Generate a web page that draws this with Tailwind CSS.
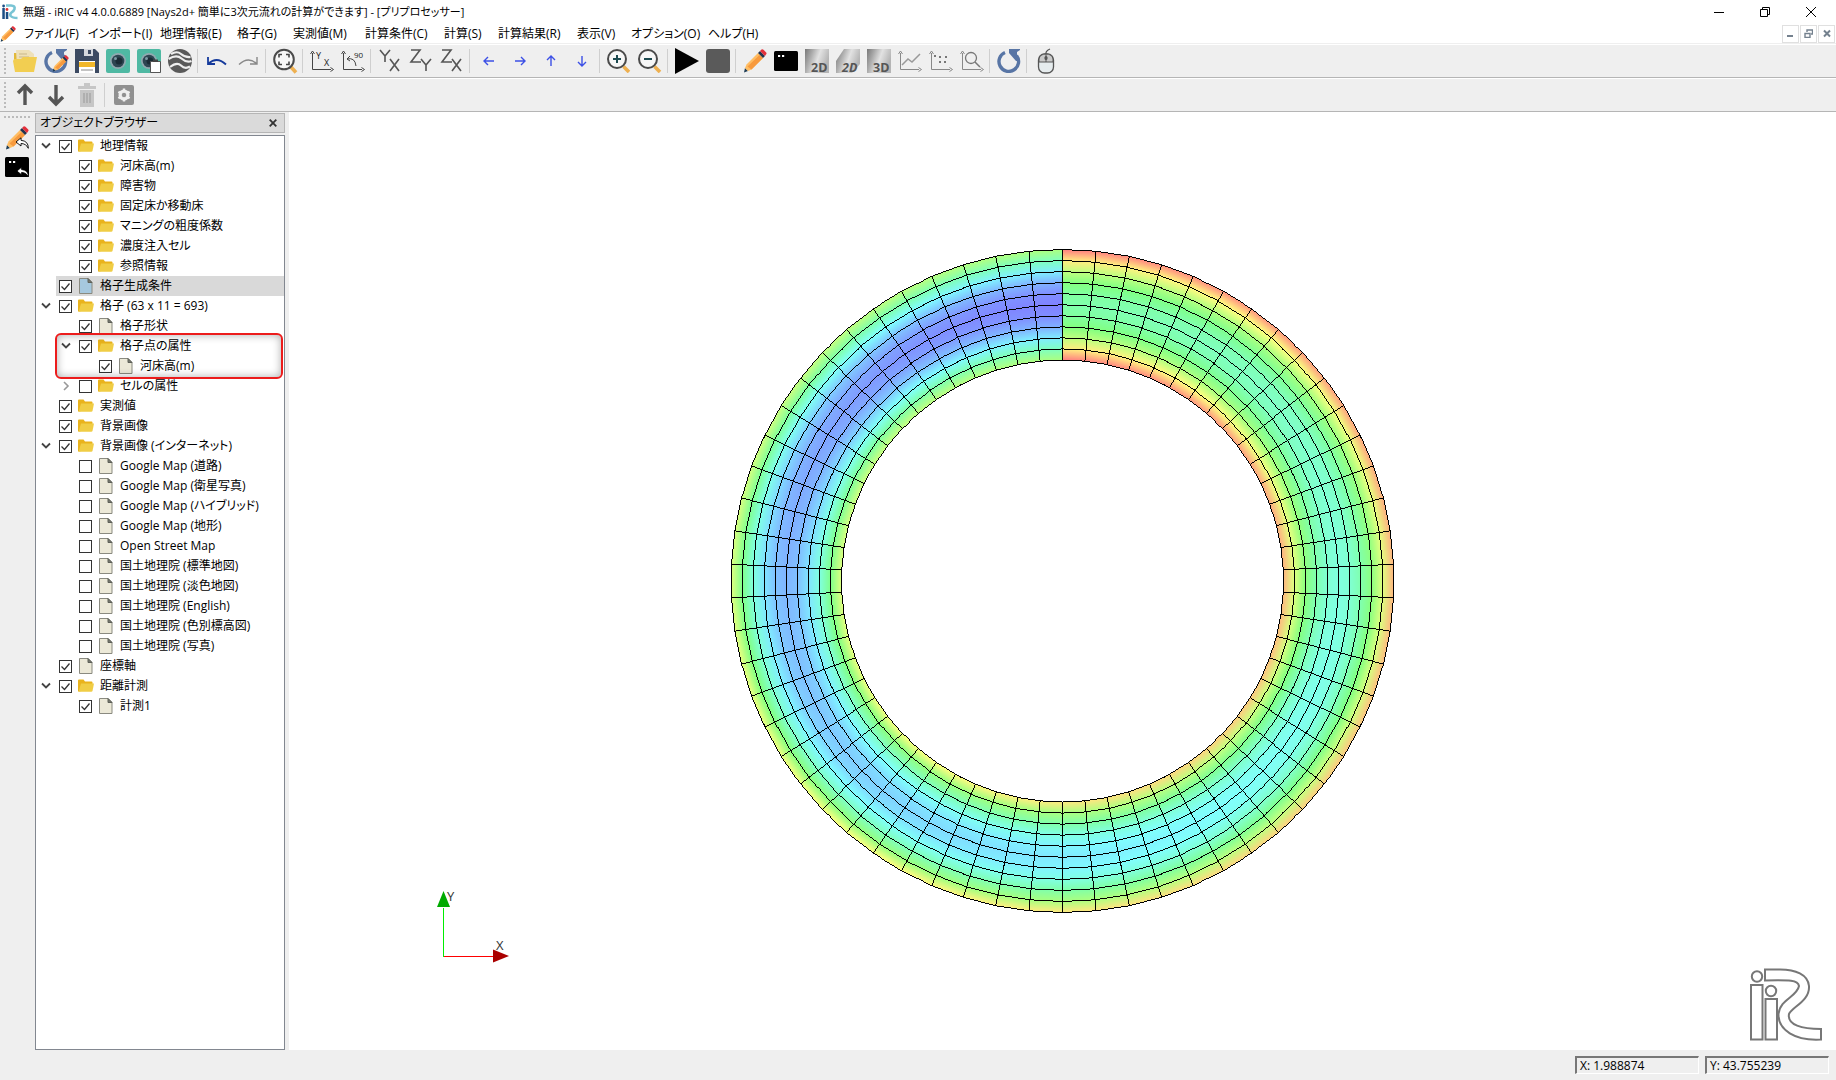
<!DOCTYPE html>
<html lang="ja">
<head>
<meta charset="utf-8">
<title>iRIC - プリプロセッサー</title>
<script src="https://cdn.jsdelivr.net/npm/@tailwindcss/browser@4"></script>
</head>
<body class="flex h-screen flex-col overflow-hidden bg-white text-xs text-black [font-family:'Open_Sans','Noto_Sans_CJK_JP',sans-serif] [font-feature-settings:'palt']">

<svg class="absolute size-0" aria-hidden="true">
  <defs>
    <linearGradient id="metal" x1="0" y1="0" x2="1" y2="0.35">
      <stop offset="0" stop-color="#777"/><stop offset=".3" stop-color="#aaa"/><stop offset=".6" stop-color="#e2e2e2"/><stop offset="1" stop-color="#b5b5b5"/>
    </linearGradient>
    <symbol id="pencil" viewBox="0 0 24 24">
      <path d="M1 23.500l1-4.500 3 3z" fill="#1d3c55"/>
      <path d="M2 19l1.500-3.500L15 4l5 5L8.500 20.500 5 22z" fill="#ffbd63"/>
      <path d="M4.500 17.500L16.500 6l3.500 3L8.500 20.500z" fill="#f79a3e"/>
      <path d="M15 4l2-2 5 5-2 2z" fill="#24344f"/>
      <path d="M17 2l1.500-1.500Q19.500-.2 20.500.8l2.700 2.700Q24 4.500 23 5.500L22 7z" fill="#e3303b"/>
    </symbol>
    <symbol id="folder" viewBox="0 0 16 16">
      <path d="M0 2.500q0-1 1-1h4.500l1.500 2h6.500q1 0 1 1V6L2 13.500H0z" fill="#e9b31c"/>
      <path d="M3 5.500h13L14.500 13q-.3.800-1.200.8H.6z" fill="#f0cd45"/>
    </symbol>
    <symbol id="file" viewBox="0 0 16 16">
      <path d="M1.500.5h8.500l4 4v11H1.500z" fill="currentColor" stroke="#8a8a80"/>
      <path d="M10 .5v4h4z" fill="#777a70" stroke="#5e6058"/>
    </symbol>
    <symbol id="lens" viewBox="0 0 24 24">
      <path d="M16.500 17.500L22 23" stroke="#eeb050" stroke-width="3.600"/>
      <circle cx="10" cy="10" r="9" fill="#f7f7f7" stroke="#4a4a4a" stroke-width="2"/>
    </symbol>
    <symbol id="axes" viewBox="0 0 24 24">
      <path d="M2.500 4v16.500H21M.5 5l2-3 2 3M20.500 18.500l3 2-3 2" fill="none" stroke="currentColor"/>
    </symbol>
    <symbol id="reload" viewBox="0 0 24 24">
      <path d="M8 3.500A9.800 9.800 0 1 0 19.500 6.500" fill="none" stroke="#5875a5" stroke-width="3.400"/>
      <path d="M12 0h11v1l-3 2v9h-1L12 4z" fill="#5875a5"/>
    </symbol>
    <symbol id="camera" viewBox="0 0 24 24">
      <rect width="24" height="24" rx="2" fill="#4fb9a3"/>
      <circle cx="12" cy="12" r="8" fill="#91a9b0"/><circle cx="12" cy="12" r="6.300" fill="#2e4652"/><circle cx="13" cy="12" r="3.500" fill="#1b2c36"/><circle cx="9.500" cy="9.500" r="1.500" fill="#7e99a4"/>
    </symbol>
    <symbol id="console" viewBox="0 0 24 24">
      <rect y="2" width="24" height="20" rx="1.500"/><path d="M4 6h2.200v2H4zM8 6h2.200v2H8z" fill="#fff"/>
    </symbol>
    <symbol id="reply" viewBox="0 0 14 12">
      <path d="M6 .8L1 5l5 4V6.500q5 0 7.300 4.800Q13.500 4 6 3.300z" stroke="#000" stroke-width=".9"/>
    </symbol>
    <symbol id="logo" viewBox="0 0 72 73">
      <g fill="#fff" stroke="#777" stroke-width="2">
        <circle cx="7" cy="8.500" r="5.200"/><rect x="1" y="17" width="11.500" height="54.500"/>
        <circle cx="21" cy="23" r="5.200"/><rect x="15.500" y="31" width="11.500" height="40.500"/>
        <path d="M15 1.500H28C46 1 58 7 59 18 60 33 42 39 39 46 37 57 52 61 71 61V71.500C45 73 28 62 28.500 46 30 31 47 29 49 18 48 12 40 12 15 12.500z"/>
      </g>
    </symbol>
  </defs>
</svg>

<header>
  <div class="flex h-6 items-center">
    <svg class="mr-[5px] ml-0.5 size-4" viewBox="0 0 16 16"><g fill="#44a8c4"><circle cx="1.600" cy="2" r="1.400" fill="#1d4e85"/><path d="M.3 4h2.500v11H.3zM3.800 8h2.500v7H3.800z" fill="#1d4e85"/><circle cx="5" cy="5.500" r="1.400" fill="#d33"/></g><path d="M4 1.500h5q4.500.3 3.500 3.500-.6 2-3 3.500-2 1.500-.8 3.500Q10.500 14 15.500 14" fill="none" stroke="#79c4d4" stroke-width="2.600"/></svg>
    <h1 class="text-[11px]">無題 - iRIC v4 4.0.0.6889 [Nays2d+ 簡単に3次元流れの計算ができます] - [プリプロセッサー]</h1>
    <div class="ml-auto flex h-5 items-center gap-9 pr-5">
      <button aria-label="最小化"><svg class="size-[10px]" viewBox="0 0 10 10"><path d="M0 5.500h10" stroke="#000"/></svg></button>
      <button aria-label="元に戻す"><svg class="size-[10px]" viewBox="0 0 10 10"><path d="M.5 2.500h7v7h-7zM2.500 2.500v-2h7v7h-2" fill="none" stroke="#000"/></svg></button>
      <button aria-label="閉じる"><svg class="size-[10px]" viewBox="0 0 10 10"><path d="M0 0l10 10M10 0L0 10" stroke="#000"/></svg></button>
    </div>
  </div>
  <div class="flex h-[19px] items-center">
    <svg class="mr-2 size-4"><use href="#pencil"/></svg>
    <nav class="flex items-center whitespace-nowrap">
      <button class="w-16 text-left">ファイル(F)</button><button class="w-[72px] text-left">インポート(I)</button><button class="w-[77px] text-left">地理情報(E)</button><button class="w-14 text-left">格子(G)</button><button class="w-[72px] text-left">実測値(M)</button><button class="w-[79px] text-left">計算条件(C)</button><button class="w-[54px] text-left">計算(S)</button><button class="w-[79px] text-left">計算結果(R)</button><button class="w-[54px] text-left">表示(V)</button><button class="w-[77px] text-left">オプション(O)</button><button class="text-left">ヘルプ(H)</button>
    </nav>
    <div class="ml-auto flex gap-px pr-px">
      <button aria-label="ウィンドウを最小化" class="grid h-[18px] w-[17px] place-items-center border border-[#e0e0e0]"><svg class="size-[9px]" viewBox="0 0 9 9"><path d="M1 7h6" stroke="#74818e" stroke-width="2"/></svg></button>
      <button aria-label="ウィンドウを元に戻す" class="grid h-[18px] w-[17px] place-items-center border border-[#e0e0e0]"><svg class="size-[9px]" viewBox="0 0 9 9"><path d="M1 4.500h5v4H1zM3 3V1h5.500v4H7" fill="none" stroke="#74818e" stroke-width="1.400"/></svg></button>
      <button aria-label="ウィンドウを閉じる" class="grid h-[18px] w-[17px] place-items-center border border-[#e0e0e0]"><svg class="size-[9px]" viewBox="0 0 9 9"><path d="M2 1.500l6 6M8 1.500l-6 6" stroke="#74818e" stroke-width="2"/></svg></button>
    </div>
  </div>
  <div class="h-0.5 border-t border-[#efefef]"></div>
  <div id="main-tools" role="toolbar" class="flex h-[33px] items-center border-b border-[#b5b5b5] bg-[#efefef]"></div>
  <div id="edit-tools" role="toolbar" class="mt-px flex h-[33px] items-center border-b border-[#b5b5b5] bg-[#efefef]"></div>
</header>

<div class="flex min-h-0 flex-1">
  <aside class="flex w-[35px] shrink-0 flex-col items-center bg-[#efefef] pt-1 pr-0.5">
    <div class="mb-1.5 h-[2px] w-[26px] bg-[repeating-linear-gradient(90deg,#bbb_0_2px,transparent_2px_4px)]"></div>
    <button aria-label="プリプロセッサー" class="mb-1 h-[27px]"><svg class="size-6" viewBox="0 0 24 24"><use href="#pencil" width="24" height="24"/><use href="#reply" x="10" y="11" width="14" height="12" fill="#fff"/></svg></button>
    <button aria-label="ソルバーコンソール"><svg class="size-6" viewBox="0 0 24 24"><use href="#console" width="24" height="24"/><use href="#reply" x="11" y="11" width="13" height="12" fill="#fff"/></svg></button>
  </aside>

  <section class="flex w-[254px] shrink-0 flex-col bg-[#efefef] pt-px pr-1">
    <div class="flex h-5 items-center justify-between border border-[#b5b5b5] bg-[#dadada] pr-[7px] pl-1">
      <h2>オブジェクトブラウザー</h2>
      <button aria-label="パネルを閉じる"><svg class="size-2" viewBox="0 0 8 8"><path d="M.7.7l6.600 6.600M7.300.7L.7 7.300" stroke="#333" stroke-width="1.800"/></svg></button>
    </div>
    <div class="relative mt-0.5 min-h-0 flex-1 border border-[#828790] bg-white">
      <ul id="tree"></ul>
      <div class="pointer-events-none absolute top-[197px] left-[19px] h-[46px] w-[228px] rounded-md border-2 border-[#ec1c1c] shadow-[inset_0_0_8px_#0005]"></div>
    </div>
  </section>

  <main class="relative flex min-w-0 flex-1 items-center justify-center bg-white">
    <canvas id="mesh" width="665" height="664" role="img" aria-label="計算格子の河床高"></canvas>
    <svg class="absolute bottom-[80px] left-[140px] h-[90px] w-[90px] [font-family:'Open_Sans',sans-serif]" viewBox="0 0 90 90">
      <path d="M14.500 28v49" stroke="#0e0" /><path d="M15 76.500h49" stroke="#f00"/>
      <path d="M14.500 11L21 27H8z" fill="#0a0"/><path d="M80 76L64 69.500v13z" fill="#a00"/>
      <text x="18" y="21" font-size="13" fill="#333">Y</text><text x="67" y="70" font-size="13" fill="#333">X</text>
    </svg>
    <svg class="absolute right-[14px] bottom-[9px] h-[73px] w-[72px]"><use href="#logo"/></svg>
  </main>
</div>

<footer class="flex h-[30px] shrink-0 items-center justify-end gap-1.5 bg-[#efefef] pr-[7px]">
  <output class="h-[18px] w-[124px] border-t-2 border-r border-b border-l-2 border-t-[#777] border-r-white border-b-white border-l-[#777] pl-[3px] leading-4">X: 1.988874</output>
  <output class="h-[18px] w-[124px] border-t-2 border-r border-b border-l-2 border-t-[#777] border-r-white border-b-white border-l-[#777] pl-[3px] leading-4">Y: 43.755239</output>
</footer>

<script>
const thin = (a, b) => {
  const g = { X: 'M0 0l9 12M9 0L0 12', Y: 'M0 0l5 6v6M10 0L5 6', Z: 'M0 0h9L0 12h10' };
  return `<g fill="none" stroke="#555" stroke-width="1.600"><path transform="translate(2 1)" d="${g[a]}"/><path transform="translate(12 10)" d="${g[b]}"/></g>`;
};
const arrow = r => `<path transform="rotate(${r} 12 12)" d="M17 12H7.500M11 8l-4 4 4 4" fill="none" stroke="#3c50e6" stroke-width="1.400"/>`;
const metal = (t, d) => `<path d="${d}" fill="url(#metal)"/><text x="6" y="23" font-size="12.500" font-weight="700" fill="#555">${t}</text>`;
const axes = c => `<use href="#axes" width="24" height="24" color="${c}"/>`;
const lens = d => `<use href="#lens" width="24" height="24"/>${d}`;
const main = [
  ['開く', '<path d="M1 4h3v14H1z" fill="#e2b93a"/><path d="M3 1h13l5 4v13H4z" fill="#eee0b9"/><path d="M6 5h8M6 8h10" stroke="#c9b78b"/><path d="M0 12l1-2h7l2-2h14l-3 15H2z" fill="#f2ce51"/>'],
  ['更新', '<use href="#reload" width="24" height="24"/><use href="#pencil" x="8" y="6" width="17" height="17"/>'],
  ['保存', '<path d="M0 0h20l4 4v20H0z" fill="#3c4a62"/><path d="M9 0h9v7H9z" fill="#d5d8de"/><path d="M13 1h3v4h-3z" fill="#3c4a62"/><path d="M4 12h16v12H4z" fill="#fff"/><path d="M4 13h16v5H4z" fill="#f1b72a"/><path d="M6 21h12" stroke="#888"/>'],
  ['スナップショット', '<use href="#camera" width="24" height="24"/>'],
  ['スナップショットをコピー', '<use href="#camera" width="24" height="24"/><path d="M13.500 12.500h10v11h-10z" fill="#fff" stroke="#555"/><path d="M16 10.500h5v2.500h-5z" fill="#444"/>'],
  ['Google Earth', '<circle cx="12" cy="12" r="12" fill="#5a5a5a"/><path d="M3 5Q9 1.500 13 5t9.500 3M.5 10q8-5 13-.5t10 2.500M2 18q7-5.500 11-1.500t9 1" fill="none" stroke="#efefef" stroke-width="2.200"/>'],
  null,
  ['元に戻す', '<path d="M3.500 14.500Q12 7 21 15.500M3 8v7h7" fill="none" stroke="#153a9c" stroke-width="1.800"/>'],
  ['やり直す', '<path d="M20.500 14.500Q12 7 3 15.500M21 8v7h-7" fill="none" stroke="#888" stroke-width="1.400"/>'],
  null,
  ['全体表示', '<path d="M18 18l5 5.500" stroke="#eeb050" stroke-width="3.600"/><circle cx="11" cy="10.500" r="9.800" fill="#f7f7f7" stroke="#4a4a4a" stroke-width="2"/><path d="M6 8.500v-3h3M13 5.500h3v3M16 12.500v3h-3M9 15.500H6v-3" fill="none" stroke="#444" stroke-width="1.600"/>'],
  null,
  ['XY軸', axes('#444') + '<text x="6" y="10" font-size="9" fill="#222">Y</text><text x="14" y="17" font-size="9" fill="#222">X</text>'],
  ['90度回転', axes('#444') + '<text x="13" y="9" font-size="8" fill="#222">90</text><path d="M6 10q8-2 9 7M9 7l-3 3 3 2" fill="none" stroke="#444"/>'],
  null,
  ['XY平面', thin('Y', 'X')], ['YZ平面', thin('Z', 'Y')], ['XZ平面', thin('Z', 'X')],
  null,
  ['左へ', arrow(0)], ['右へ', arrow(180)], ['上へ', arrow(90)], ['下へ', arrow(270)],
  null,
  ['拡大', lens('<path d="M10 6v8M6 10h8" stroke="#1c4a50" stroke-width="2"/>')],
  ['縮小', lens('<path d="M6 10h8" stroke="#1c4a50" stroke-width="2"/>')],
  null,
  ['計算実行', '<path d="M0-1v26l24-13z"/>'],
  ['計算停止', '<rect width="24" height="24" y="0" rx="3" fill="#5a5a5a"/>'],
  null,
  ['プリプロセッサー', '<use href="#pencil" width="24" height="24"/>'],
  ['コンソール', '<use href="#console" width="24" height="24"/>'],
  ['2D表示', metal('2D', 'M0 0h24v24H0z')],
  ['2D鳥瞰表示', metal('<tspan font-style="italic">2D</tspan>', 'M8 0h16v15l-8 9H0V12z')],
  ['3D表示', metal('3D', 'M0 0h24v24H0z')],
  ['グラフ', axes('#888') + '<path d="M4 16l6-6 4 3 8-8" fill="none" stroke="#999" stroke-width="1.500"/>'],
  ['散布図', axes('#888') + '<path d="M5 6h2v2H5zM10 12h2v2h-2zM10 7h2v2h-2zM15 12h2v2h-2zM16 7h2v2h-2z" fill="#777"/>'],
  ['検証', axes('#888') + '<circle cx="11" cy="9" r="5.500" fill="none" stroke="#777" stroke-width="1.300"/><path d="M15 13l5 5" stroke="#777" stroke-width="1.500"/>'],
  null,
  ['再読み込み', '<use href="#reload" width="24" height="24"/>'],
  null,
  ['マウス', '<path d="M12 6Q11 2 16 0" fill="none" stroke="#555" stroke-width="1.300"/><rect x="4.500" y="5" width="15" height="19" rx="6" fill="#e6ecee" stroke="#555" stroke-width="1.300"/><path d="M5 13v-3q1-5 7-5t7 5v3z" fill="#c9c9c9" stroke="#555"/><path d="M12 5v8" stroke="#555"/><rect x="10.500" y="7" width="3" height="4" rx="1.500" fill="#555"/>']
];
const edit = [
  ['上へ移動', '<path d="M12 22V3M5 10l7-7 7 7" fill="none" stroke="#555" stroke-width="3.400"/>'],
  ['下へ移動', '<path d="M12 2v19M5 14l7 7 7-7" fill="none" stroke="#555" stroke-width="3.400"/>'],
  ['削除', '<path d="M3 3h18v3H3zM9 0h6v3H9zM5 7h14v17H5z" fill="#c6c6c6"/><path d="M9 10v10M12 10v10M15 10v10" stroke="#a8a8a8" stroke-width="1.500"/>'],
  null,
  ['設定', '<rect x="2" y="2" width="20" height="20" rx="2" fill="#909090"/><circle cx="12" cy="12" r="4" fill="none" stroke="#eee" stroke-width="3"/><path d="M12 5.500v13M6.400 8.800l11.200 6.400M6.400 15.200l11.200-6.400" stroke="#eee" stroke-width="2.400"/><circle cx="12" cy="12" r="2.200" fill="#909090"/>']
];
const grip = '<span class="mr-[3px] ml-1 h-[26px] w-[2px] bg-[repeating-linear-gradient(#bbb_0_2px,transparent_2px_4px)]"></span>';
const bar = items => grip + items.map(i => i
  ? `<button aria-label="${i[0]}" class="grid w-[31px] shrink-0 place-items-center"><svg class="size-6 overflow-visible" viewBox="0 0 24 24">${i[1]}</svg></button>`
  : '<span class="mr-[3px] ml-[2px] h-6 w-px shrink-0 bg-[#cfcfcf]"></span>').join('');
document.getElementById('main-tools').innerHTML = bar(main);
document.getElementById('edit-tools').innerHTML = bar(edit);

// Tree rows: level, expander (v open, > closed), checked, icon, label
const rows = [
  [0,'v',1,'folder','地理情報'],[1,'',1,'folder','河床高(m)'],[1,'',1,'folder','障害物'],[1,'',1,'folder','固定床か移動床'],
  [1,'',1,'folder','マニングの粗度係数'],[1,'',1,'folder','濃度注入セル'],[1,'',1,'folder','参照情報'],
  [0,'',1,'active','格子生成条件'],[0,'v',1,'folder','格子 (63 x 11 = 693)'],[1,'',1,'file','格子形状'],
  [1,'v',1,'folder','格子点の属性'],[2,'',1,'file','河床高(m)'],[1,'>',0,'folder','セルの属性'],
  [0,'',1,'folder','実測値'],[0,'',1,'folder','背景画像'],[0,'v',1,'folder','背景画像 (インターネット)'],
  [1,'',0,'file','Google Map (道路)'],[1,'',0,'file','Google Map (衛星写真)'],[1,'',0,'file','Google Map (ハイブリッド)'],
  [1,'',0,'file','Google Map (地形)'],[1,'',0,'file','Open Street Map'],[1,'',0,'file','国土地理院 (標準地図)'],
  [1,'',0,'file','国土地理院 (淡色地図)'],[1,'',0,'file','国土地理院 (English)'],[1,'',0,'file','国土地理院 (色別標高図)'],
  [1,'',0,'file','国土地理院 (写真)'],[0,'',1,'file','座標軸'],[0,'v',1,'folder','距離計測'],[1,'',1,'file','計測1']
];
const indent = ['flex h-5 pl-0', 'flex h-5 pl-5', 'flex h-5 pl-10'];
const expander = {
  'v': '<path d="M1 2.500l4 4 4-4" fill="none" stroke="#444" stroke-width="1.800"/>',
  '>': '<path d="M3 1l4 4-4 4" fill="none" stroke="#999" stroke-width="1.600"/>',
  '': ''
};
document.getElementById('tree').innerHTML = rows.map(([lv, ex, on, ic, name]) => `
  <li class="${indent[lv]}">
    <span class="grid w-5 shrink-0 place-items-center"><svg class="size-[10px]" viewBox="0 0 10 10">${expander[ex]}</svg></span>
    <label class="${ic === 'active' ? 'flex flex-1 items-center bg-[#d9d9d9] pl-[3px] whitespace-nowrap' : 'flex flex-1 items-center pl-[3px] whitespace-nowrap'}">
      <span class="relative size-[13px]">
        <input type="checkbox" class="peer block size-[13px] appearance-none border border-[#333] bg-white" ${on ? 'checked' : ''}>
        <svg class="pointer-events-none absolute inset-0 hidden size-[13px] peer-checked:block" viewBox="0 0 13 13"><path d="M2.500 6.500l3 3 5-6" fill="none" stroke="#333" stroke-width="1.300"/></svg>
      </span>
      <svg class="${ic === 'active' ? 'mx-1.5 size-4 text-[#a6c8de]' : 'mx-1.5 size-4 text-[#ece9d8]'}"><use href="${ic === 'folder' ? '#folder' : '#file'}"/></svg>
      ${name}
    </label>
  </li>`).join('');

// Ring mesh: 62 cells around, 10 across, coloured by bed elevation at the nodes
const cv = document.getElementById('mesh'), ctx = cv.getContext('2d');
const W = cv.width, H = cv.height, cx = 332, cy = 331.5, R = 331.5, r0 = 221, NI = 62, NJ = 10;
const img = ctx.createImageData(W, H), px = img.data;
const put = (x, y, r, g, b) => { const k = (y * W + x) * 4; px[k] = r; px[k + 1] = g; px[k + 2] = b; px[k + 3] = 255; };
const channel = (n, h) => { const k = (n + h / 60) % 6; return 128 + 127 * (1 - Math.max(0, Math.min(k, 4 - k, 1))); };
const colours = [];
for (let i = 0; i <= NI; i++) {
  colours.push([]);
  for (let j = 0; j <= NJ; j++) {
    const e = j / NJ * 2 - 1, h = 100 * i / NI + 140 * (1 - e * e);
    colours[i].push([channel(5, h), channel(3, h), channel(1, h)]);
  }
}
for (let y = 0; y < H; y++) for (let x = 0; x < W; x++) {
  const dx = x - cx, dy = y - cy;
  let a = Math.atan2(dx, -dy); if (a < 0) a += 2 * Math.PI;
  const step = 2 * Math.PI / NI, off = (a % step) - step / 2;
  const r = Math.hypot(dx, dy) * Math.cos(off) / Math.cos(step / 2);
  if (r < r0 || r > R) continue;
  const u = a / step, v = (r - r0) / (R - r0) * NJ;
  const i = Math.min(NI - 1, Math.floor(u)), j = Math.min(NJ - 1, Math.floor(v)), fu = u - i, fv = v - j;
  const c = [0, 1, 2].map(k =>
    (colours[i][j][k] * (1 - fu) + colours[i + 1][j][k] * fu) * (1 - fv) +
    (colours[i][j + 1][k] * (1 - fu) + colours[i + 1][j + 1][k] * fu) * fv);
  put(x, y, c[0], c[1], c[2]);
}
const line = (x0, y0, x1, y1) => {
  const n = Math.max(1, Math.ceil(Math.max(Math.abs(x1 - x0), Math.abs(y1 - y0))));
  for (let i = 0; i <= n; i++) {
    const x = Math.round(x0 + (x1 - x0) * i / n), y = Math.min(H - 1, Math.max(0, Math.round(y0 + (y1 - y0) * i / n)));
    put(x, y, 0, 0, 0);
  }
};
const node = (i, j) => { const a = 2 * Math.PI * i / NI, r = r0 + (R - r0) * j / NJ; return [cx + r * Math.sin(a), cy - r * Math.cos(a)]; };
for (let i = 0; i < NI; i++) {
  line(...node(i, 0), ...node(i, NJ));
  for (let j = 0; j <= NJ; j++) line(...node(i, j), ...node(i + 1, j));
}
ctx.putImageData(img, 0, 0);
</script>
</body>
</html>
